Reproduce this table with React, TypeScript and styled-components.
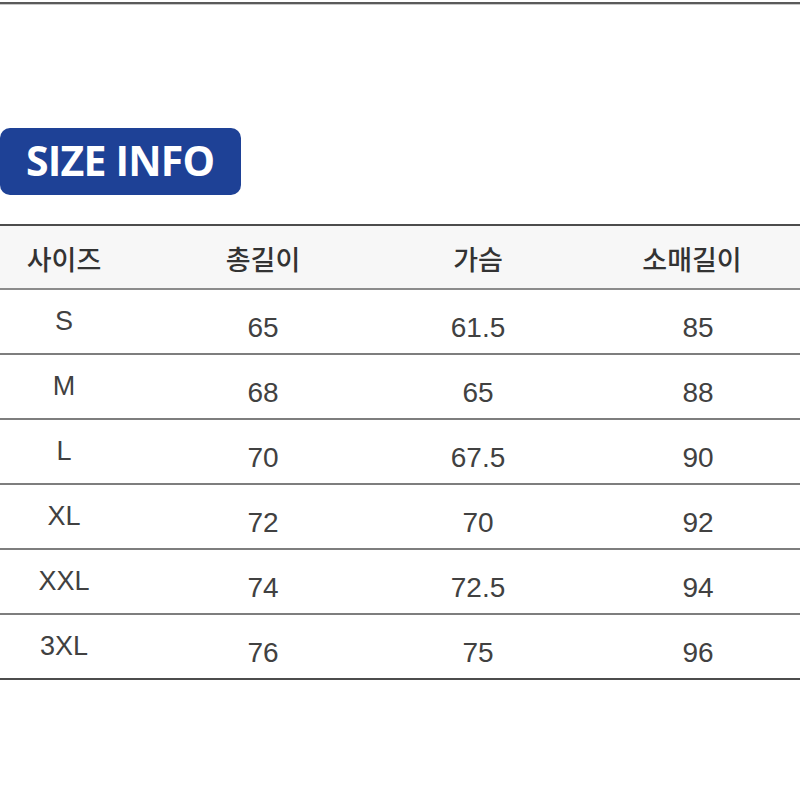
import React from 'react';
import styled, { createGlobalStyle } from 'styled-components';

const GlobalStyle = createGlobalStyle`
  html, body {
    margin: 0;
    padding: 0;
    background: #ffffff;
    overflow: hidden;
  }
  body {
    font-family: "Liberation Sans", Arial, sans-serif;
  }
`;

interface SizeRow {
  size: string;
  length: string;
  chest: string;
  sleeve: string;
}

const headers = ['사이즈', '총길이', '가슴', '소매길이'];

const rows: SizeRow[] = [
  { size: 'S', length: '65', chest: '61.5', sleeve: '85' },
  { size: 'M', length: '68', chest: '65', sleeve: '88' },
  { size: 'L', length: '70', chest: '67.5', sleeve: '90' },
  { size: 'XL', length: '72', chest: '70', sleeve: '92' },
  { size: 'XXL', length: '74', chest: '72.5', sleeve: '94' },
  { size: '3XL', length: '76', chest: '75', sleeve: '96' },
];

export default function App() {
  return (
    <>
      <GlobalStyle />
      <Page>
        <TopRule />
        <Badge>
          <BadgeText>SIZE INFO</BadgeText>
        </Badge>
        <Table>
          <HeadRow>
            {headers.map((h, i) => (
              <HeadCell key={h} $last={i === 3}>{h}</HeadCell>
            ))}
          </HeadRow>
          {rows.map((r, i) => (
            <BodyRow key={r.size} $last={i === rows.length - 1}>
              <SizeCell>{r.size}</SizeCell>
              <ValueCell>{r.length}</ValueCell>
              <ValueCell>{r.chest}</ValueCell>
              <ValueCell $last>{r.sleeve}</ValueCell>
            </BodyRow>
          ))}
        </Table>
      </Page>
    </>
  );
}

const Page = styled.main`
  display: flex;
  flex-direction: column;
  width: 800px;
  height: 800px;
  padding-top: 2px;
  box-sizing: border-box;
`;

const TopRule = styled.div`
  height: 2px;
  background: #5a5a5a;
  box-shadow: 0 1px 0 #c8c8c8;
`;

const Badge = styled.div`
  display: flex;
  align-items: center;
  align-self: flex-start;
  width: 241px;
  height: 67px;
  margin-top: 124px;
  box-sizing: border-box;
  padding-left: 26px;
  background: #1e4196;
  border-radius: 10px;
`;

const BadgeText = styled.span`
  font-family: "Open Sans", "Noto Sans", sans-serif;
  font-weight: 700;
  font-size: 41px;
  letter-spacing: -0.8px;
  color: #ffffff;
  line-height: 1;
  padding-bottom: 2px;
`;

const Table = styled.section`
  display: flex;
  flex-direction: column;
  margin-top: 29px;
  border-top: 2px solid #4c4c4c;
`;

const Grid = styled.div`
  display: grid;
  grid-template-columns: 128px 270px 160px 1fr;
`;

const HeadRow = styled(Grid)`
  height: 62px;
  background: #f7f7f7;
  border-bottom: 2px solid #8c8c8c;
`;

const BodyRow = styled(Grid)<{ $last?: boolean }>`
  height: 63px;
  border-bottom: 2px solid ${({ $last }) => ($last ? '#4c4c4c' : '#7e7e7e')};
`;

const HeadCell = styled.div<{ $last?: boolean }>`
  display: flex;
  align-items: center;
  justify-content: center;
  padding-left: ${({ $last }) => ($last ? '26px' : '0')};
  padding-top: 3px;
  font-family: "Noto Sans CJK KR", "Noto Sans", sans-serif;
  font-weight: 500;
  font-size: 27px;
  color: #333333;
`;

const SizeCell = styled.div`
  display: flex;
  align-items: center;
  justify-content: center;
  padding-bottom: 1px;
  font-size: 27px;
  color: #414141;
`;

const ValueCell = styled.div<{ $last?: boolean }>`
  display: flex;
  align-items: center;
  justify-content: center;
  padding-top: 12px;
  padding-left: ${({ $last }) => ($last ? '38px' : '0')};
  font-size: 28px;
  color: #414141;
`;
